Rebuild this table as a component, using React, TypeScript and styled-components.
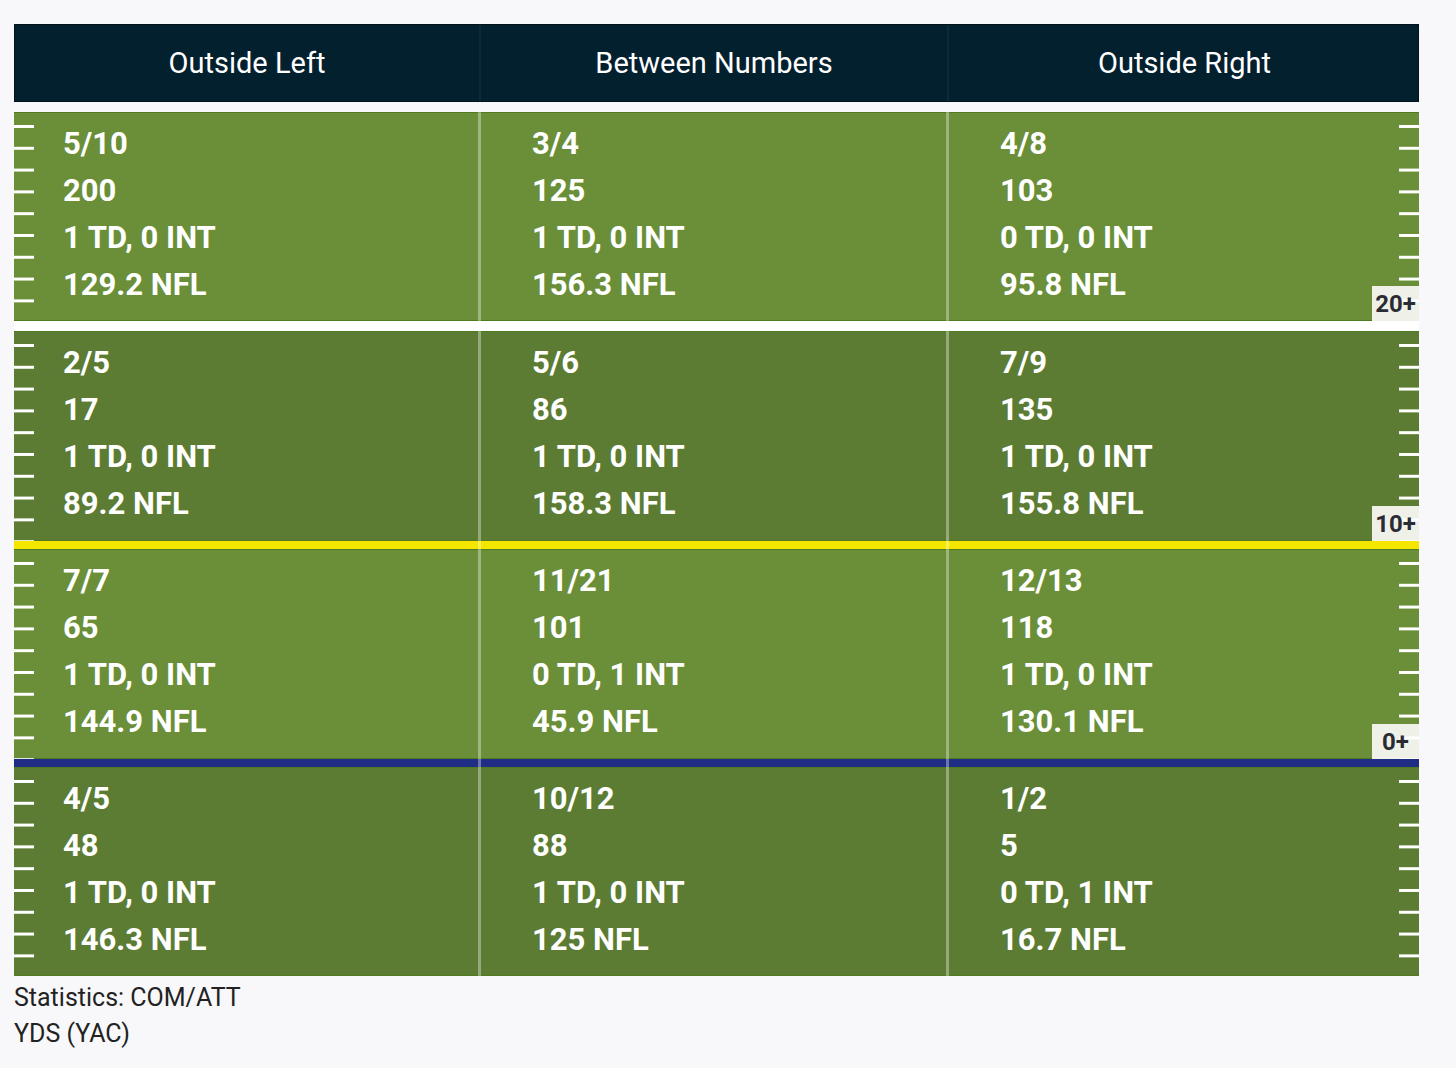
import React from 'react'
import styled, { createGlobalStyle } from 'styled-components'

const GlobalStyle = createGlobalStyle`
  html, body {
    margin: 0;
    padding: 0;
    background: #f8f8fa;
    font-family: Roboto, "Liberation Sans", Arial, sans-serif;
  }
`

const Page = styled.div`
  padding: 24px 0 0 14px;
`

const Chart = styled.div`
  width: 1405px;
`

const cols = '464px 468px 473px'

const Header = styled.div`
  display: grid;
  grid-template-columns: ${cols};
  height: 78px;
  background: #03202f;
  border: 1px solid #01121b;
  box-sizing: border-box;
`

const HeaderCell = styled.div<{ $divider?: boolean }>`
  display: flex;
  align-items: center;
  justify-content: center;
  color: #ffffff;
  font-size: 29px;
  font-weight: 400;
  border-left: ${p => (p.$divider ? '2px solid #0b2a3a' : 'none')};
`

const Field = styled.div`
  margin-top: 10px;
  display: flex;
  flex-direction: column;
`

const Band = styled.div<{ $dark?: boolean; $height: number }>`
  position: relative;
  display: grid;
  grid-template-columns: ${cols};
  height: ${p => p.$height}px;
  background: ${p => (p.$dark ? '#5c7c33' : '#6a8f38')};
  box-shadow: inset 0 -1px 0 #4f7a1f, inset 0 1px 0 #4f7a1f;

  &::before,
  &::after {
    content: '';
    position: absolute;
    top: 12.5px;
    bottom: 0;
    width: 20px;
    background-image: linear-gradient(to bottom, #ffffff 0 3px, transparent 3px);
    background-size: 20px 21.8px;
    background-repeat: repeat-y;
    pointer-events: none;
  }
  &::before {
    left: 0;
  }
  &::after {
    right: 0;
  }
`

const Cell = styled.div<{ $divider?: boolean }>`
  padding: 8px 0 0 ${p => (p.$divider ? '51px' : '49px')};
  border-left: ${p => (p.$divider ? '3px solid rgba(255, 255, 255, 0.35)' : 'none')};
  color: #ffffff;
  font-size: 31px;
  font-weight: 700;
  line-height: 47px;
`

const Stripe = styled.div<{ $color: string; $size: number }>`
  display: grid;
  grid-template-columns: ${cols};
  height: ${p => p.$size}px;
  background: ${p => p.$color};
`

const StripeSeg = styled.div<{ $divider?: boolean }>`
  border-left: ${p => (p.$divider ? '3px solid rgba(255, 255, 255, 0.35)' : 'none')};
`

const Badge = styled.div`
  position: absolute;
  right: 0;
  bottom: 0;
  width: 47px;
  height: 35px;
  display: flex;
  align-items: center;
  justify-content: center;
  background: #eff1e8;
`

const BadgeText = styled.span`
  position: relative;
  z-index: 2;
  color: #2a2b33;
  font-size: 24px;
  font-weight: 700;
  line-height: 1;
`

const Legend = styled.div`
  padding-top: 4px;
  color: #222222;
  font-size: 25px;
  line-height: 36px;
`

type Stat = [string, string, string, string]

const bands: { dark: boolean; height: number; badge?: string; cells: Stat[] }[] = [
  {
    dark: false,
    height: 209,
    badge: '20+',
    cells: [
      ['5/10', '200', '1 TD, 0 INT', '129.2 NFL'],
      ['3/4', '125', '1 TD, 0 INT', '156.3 NFL'],
      ['4/8', '103', '0 TD, 0 INT', '95.8 NFL'],
    ],
  },
  {
    dark: true,
    height: 210,
    badge: '10+',
    cells: [
      ['2/5', '17', '1 TD, 0 INT', '89.2 NFL'],
      ['5/6', '86', '1 TD, 0 INT', '158.3 NFL'],
      ['7/9', '135', '1 TD, 0 INT', '155.8 NFL'],
    ],
  },
  {
    dark: false,
    height: 210,
    badge: '0+',
    cells: [
      ['7/7', '65', '1 TD, 0 INT', '144.9 NFL'],
      ['11/21', '101', '0 TD, 1 INT', '45.9 NFL'],
      ['12/13', '118', '1 TD, 0 INT', '130.1 NFL'],
    ],
  },
  {
    dark: true,
    height: 209,
    cells: [
      ['4/5', '48', '1 TD, 0 INT', '146.3 NFL'],
      ['10/12', '88', '1 TD, 0 INT', '125 NFL'],
      ['1/2', '5', '0 TD, 1 INT', '16.7 NFL'],
    ],
  },
]

const stripes = [
  { color: '#ffffff', size: 10 },
  { color: '#f5e600', size: 8 },
  { color: '#1f2d84', size: 8 },
]

const Separator = ({ color, size }: { color: string; size: number }) => (
  <Stripe $color={color} $size={size}>
    <StripeSeg />
    <StripeSeg $divider />
    <StripeSeg $divider />
  </Stripe>
)

const App = () => {
  return (
    <Page>
      <GlobalStyle />
      <Chart>
        <Header>
          <HeaderCell>Outside Left</HeaderCell>
          <HeaderCell $divider>Between Numbers</HeaderCell>
          <HeaderCell $divider>Outside Right</HeaderCell>
        </Header>

        <Field>
          {bands.map((band, i) => (
            <React.Fragment key={i}>
              <Band $dark={band.dark} $height={band.height}>
                {band.cells.map((stat, j) => (
                  <Cell key={j} $divider={j > 0}>
                    {stat.map(line => (
                      <div key={line}>{line}</div>
                    ))}
                  </Cell>
                ))}
                {band.badge && (
                  <Badge>
                    <BadgeText>{band.badge}</BadgeText>
                  </Badge>
                )}
              </Band>
              {stripes[i] && <Separator {...stripes[i]} />}
            </React.Fragment>
          ))}
        </Field>

        <Legend>
          <div>Statistics: COM/ATT</div>
          <div>YDS (YAC)</div>
        </Legend>
      </Chart>
    </Page>
  )
}

export default App
